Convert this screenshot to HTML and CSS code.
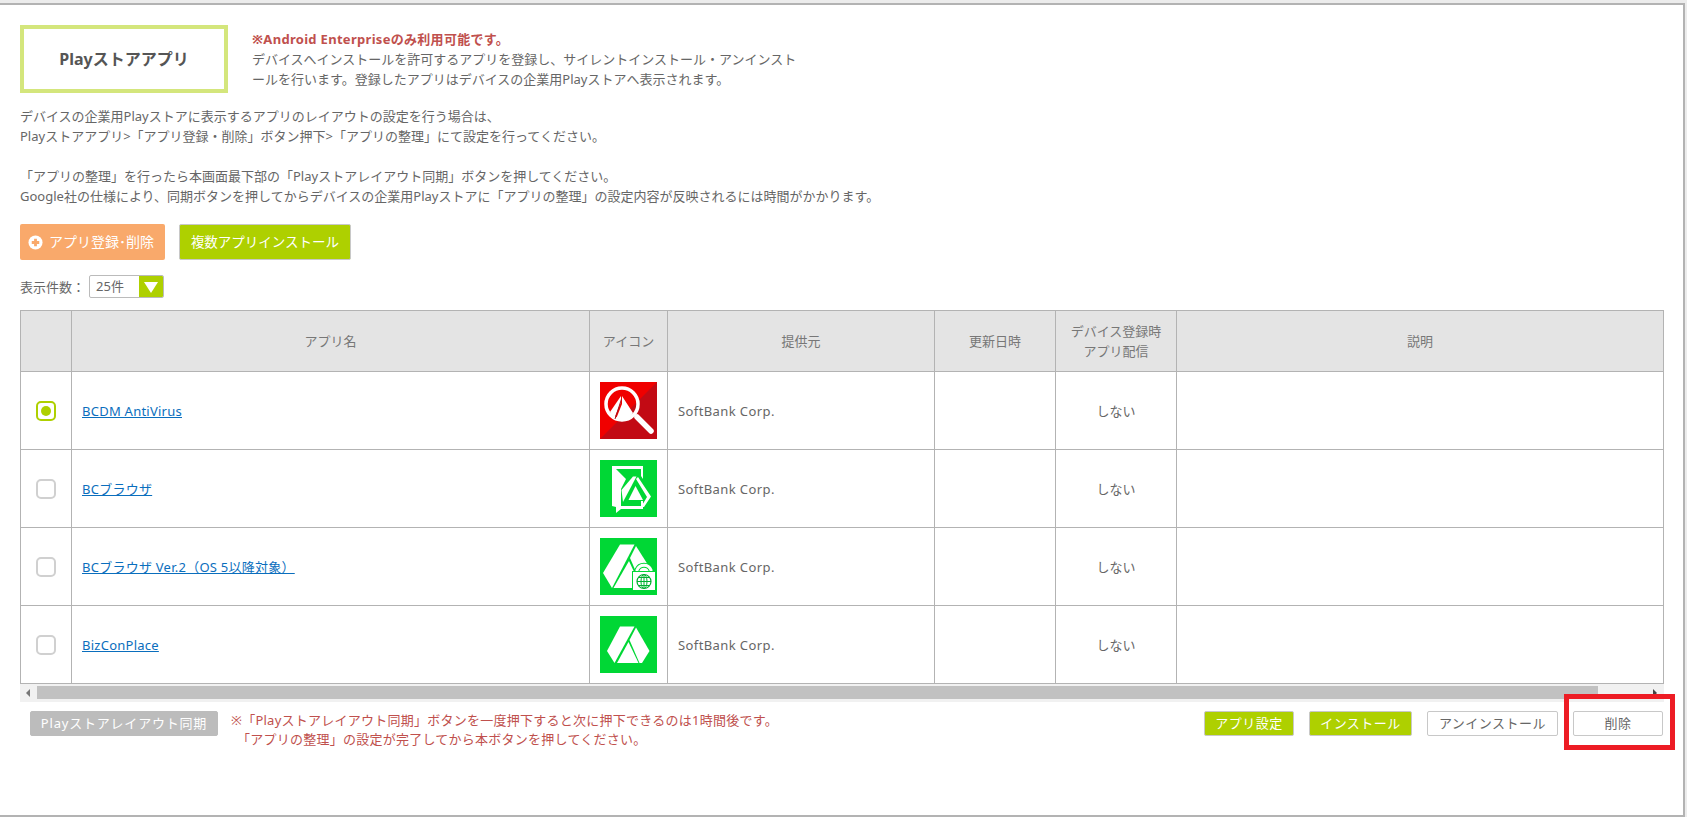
FILE: index.html
```html
<!DOCTYPE html>
<html lang="ja">
<head>
    <meta charset="UTF-8">
    <meta name="viewport" content="width=device-width, initial-scale=1.0">
    <title>Playストアアプリ</title>
    <link rel="stylesheet" href="styles.css">
</head>
<body>
<div class="frame">
    <div class="intro">
        <h1 class="page-title">Playストアアプリ</h1>
        <div class="intro-text">
            <p class="note">※Android Enterpriseのみ利用可能です。</p>
            <p>デバイスへインストールを許可するアプリを登録し、サイレントインストール・アンインストールを行います。登録したアプリはデバイスの企業用Playストアへ表示されます。</p>
        </div>
    </div>

    <p class="guide">デバイスの企業用Playストアに表示するアプリのレイアウトの設定を行う場合は、<br>Playストアアプリ&gt;「アプリ登録・削除」ボタン押下&gt;「アプリの整理」にて設定を行ってください。</p>
    <p class="guide">「アプリの整理」を行ったら本画面最下部の「Playストアレイアウト同期」ボタンを押してください。<br>Google社の仕様により、同期ボタンを押してからデバイスの企業用Playストアに「アプリの整理」の設定内容が反映されるには時間がかかります。</p>

    <div class="actions">
        <a class="btn-orange">
            <svg class="plus" viewBox="0 0 16 16"><circle cx="8" cy="8" r="7.5" fill="#fff"/><path d="M8 4v8M4 8h8" stroke="#f9a96b" stroke-width="3"/></svg>
            アプリ登録･削除
        </a>
        <a class="btn-green">複数アプリインストール</a>
    </div>

    <div class="per-page">
        <span>表示件数：</span>
        <div class="select">
            <span class="select-value">25件</span>
            <span class="select-arrow"></span>
        </div>
    </div>

    <table class="apps">
        <colgroup>
            <col class="c-check"><col class="c-name"><col class="c-icon"><col class="c-vendor"><col class="c-date"><col class="c-deliver"><col>
        </colgroup>
        <thead>
            <tr>
                <th></th>
                <th>アプリ名</th>
                <th>アイコン</th>
                <th>提供元</th>
                <th>更新日時</th>
                <th>デバイス登録時<br>アプリ配信</th>
                <th>説明</th>
            </tr>
        </thead>
        <tbody>
            <tr>
                <td><span class="radio checked"></span></td>
                <td><a href="#">BCDM AntiVirus</a></td>
                <td class="icon-cell">
                    <svg class="app-icon" viewBox="0 0 57 57">
                        <rect width="57" height="57" fill="#f00000"/>
                        <path d="M57 0V57H0Z" fill="#c20a14"/>
                        <path d="M37 35L51 49" stroke="#fff" stroke-width="5.5" stroke-linecap="round"/>
                        <circle cx="22" cy="22" r="16" fill="none" stroke="#fff" stroke-width="3.5"/>
                        <path d="M21 14L10 30L14 37L21 20Z" fill="#fff"/>
                        <path d="M22 14L33 31L29 37H16L22 22Z" fill="#fff"/>
                        <path d="M21.5 17L15 37" stroke="#a8121c" stroke-width="1"/>
                    </svg>
                </td>
                <td class="vendor">SoftBank Corp.</td>
                <td></td>
                <td class="center">しない</td>
                <td></td>
            </tr>
            <tr>
                <td><span class="radio"></span></td>
                <td><a href="#">BCブラウザ</a></td>
                <td class="icon-cell">
                    <svg class="app-icon" viewBox="0 0 57 57">
                        <rect width="57" height="57" fill="#00d735"/>
                        <path d="M12 6H43V19L41 16V9H16L26 19L21 29V46H41V41H43V49H21L16 53V47L12 46Z" fill="#fff"/>
                        <path d="M33 16.5H36.5L23 42L21.5 30Z" fill="#fff"/>
                        <path d="M38 17L51 36.5L44 47H41L47 37L36 19Z" fill="#fff"/>
                        <path d="M35.5 26L43 40H28.5Z" fill="#fff"/>
                    </svg>
                </td>
                <td class="vendor">SoftBank Corp.</td>
                <td></td>
                <td class="center">しない</td>
                <td></td>
            </tr>
            <tr>
                <td><span class="radio"></span></td>
                <td><a href="#">BCブラウザ Ver.2（OS 5以降対象）</a></td>
                <td class="icon-cell">
                    <svg class="app-icon" viewBox="0 0 57 57">
                        <rect width="57" height="57" fill="#00d735"/>
                        <path d="M20 6.5H34.5L12 50L3 35Z" fill="#fff"/>
                        <path d="M36 8L55 38L48 50H43L30 20Z" fill="#fff"/>
                        <path d="M29 23L41.5 50H13.5Z" fill="#fff"/>
                        <path d="M37 34V32A7.5 7.5 0 0 1 51 32V34" fill="none" stroke="#00d735" stroke-width="5"/>
                        <path d="M37 34V32A7.5 7.5 0 0 1 51 32V34" fill="none" stroke="#fff" stroke-width="3"/>
                        <rect x="32.5" y="33.5" width="23" height="19" fill="#fff" stroke="#00d735"/>
                        <circle cx="44" cy="43.5" r="7" fill="none" stroke="#00b030" stroke-width="1.2"/>
                        <path d="M37 43.5H51M44 36.5V50.5M38.5 39.5H49.5M38.5 47.5H49.5" stroke="#00b030" stroke-width="1"/>
                        <ellipse cx="44" cy="43.5" rx="3" ry="7" fill="none" stroke="#00b030"/>
                    </svg>
                </td>
                <td class="vendor">SoftBank Corp.</td>
                <td></td>
                <td class="center">しない</td>
                <td></td>
            </tr>
            <tr>
                <td><span class="radio"></span></td>
                <td><a href="#">BizConPlace</a></td>
                <td class="icon-cell">
                    <svg class="app-icon" viewBox="0 0 57 57">
                        <rect width="57" height="57" fill="#00d735"/>
                        <path d="M20 10.5H34.5L14.5 47L7 35Z" fill="#fff"/>
                        <path d="M36 11.5L49.5 35L42 47H39.5L29.5 24Z" fill="#fff"/>
                        <path d="M28.5 26L38.5 47H17Z" fill="#fff"/>
                    </svg>
                </td>
                <td class="vendor">SoftBank Corp.</td>
                <td></td>
                <td class="center">しない</td>
                <td></td>
            </tr>
        </tbody>
    </table>

    <div class="scrollbar">
        <span class="arrow-left"></span>
        <div class="thumb"></div>
        <span class="arrow-right"></span>
    </div>

    <div class="footer-bar">
        <a class="btn-small btn-sync">Playストアレイアウト同期</a>
        <p class="sync-note">※「Playストアレイアウト同期」ボタンを一度押下すると次に押下できるのは1時間後です。<br><span class="indent">「アプリの整理」の設定が完了してから本ボタンを押してください。</span></p>
        <div class="footer-buttons">
            <a class="btn-small btn-lime w-setting">アプリ設定</a>
            <a class="btn-small btn-lime w-install">インストール</a>
            <a class="btn-small btn-plain w-uninstall">アンインストール</a>
            <a class="btn-small btn-plain w-delete">削除</a>
        </div>
    </div>

    <div class="highlight"></div>
</div>
</body>
</html>
```

FILE: styles.css
```css
* {
  margin: 0;
  padding: 0;
  box-sizing: border-box;
}

html, body {
  height: 100%;
  overflow: hidden;
}

body {
  font-family: "Noto Sans", "Noto Sans CJK JP", sans-serif;
  font-size: 13px;
  line-height: 20px;
  color: #666;
  background-color: #ececec;
  padding-top: 3px;
}

.frame {
  position: relative;
  width: 1685px;
  height: 814px;
  background-color: #fff;
  border-top: 2px solid #b3b3b3;
  border-right: 2px solid #b3b3b3;
  border-bottom: 2px solid #b3b3b3;
  padding: 20px 20px 0 20px;
}

.intro {
  display: flex;
  margin-bottom: 13px;
}

.page-title {
  width: 208px;
  height: 68px;
  border: 4px solid #d4e67c;
  font-size: 16px;
  font-weight: bold;
  line-height: 60px;
  text-align: center;
  color: #555;
}

.intro-text {
  width: 556px;
  margin-left: 24px;
  margin-top: 4px;
}

.note {
  color: #c0504d;
  font-weight: bold;
  letter-spacing: 0.3px;
}

.guide {
  margin-bottom: 20px;
}

.guide + .actions {
  margin-top: -2px;
}

.actions {
  display: flex;
  gap: 14px;
}

.btn-orange, .btn-green {
  display: flex;
  align-items: center;
  height: 36px;
  border-radius: 2px;
  color: #fff;
  font-size: 14px;
}

.btn-orange {
  width: 145px;
  padding-left: 8px;
  background-color: #f9a96b;
  gap: 6px;
}

.btn-green {
  justify-content: center;
  width: 172px;
  background-color: #aed000;
  border: 1px solid #c8c8c8;
  font-size: 13.5px;
}

.plus {
  width: 15px;
  height: 15px;
}

.per-page {
  display: flex;
  align-items: center;
  height: 23px;
  margin-top: 15px;
}

.select {
  display: flex;
  width: 75px;
  height: 23px;
  margin-left: 4px;
  border: 1px solid #bbb;
  border-radius: 2px;
  overflow: hidden;
}

.select-value {
  flex: 1;
  padding-left: 6px;
  line-height: 21px;
}

.select-arrow {
  position: relative;
  width: 24px;
  background-color: #aed000;
}

.select-arrow::after {
  content: "";
  position: absolute;
  top: 6px;
  left: 5px;
  border-left: 7px solid transparent;
  border-right: 7px solid transparent;
  border-top: 11px solid #fff;
}

.apps {
  width: 1644px;
  margin-top: 12px;
  border-collapse: collapse;
  table-layout: fixed;
}

.c-check { width: 51px; }
.c-name { width: 518px; }
.c-icon { width: 78px; }
.c-vendor { width: 267px; }
.c-date { width: 121px; }
.c-deliver { width: 121px; }

.apps th, .apps td {
  border: 1px solid #b3b3b3;
}

.apps th {
  height: 61px;
  background-color: #e4e4e4;
  font-weight: normal;
  color: #777;
  text-align: center;
}

.apps td {
  height: 78px;
  padding: 0 10px;
}

.apps td:first-child {
  padding: 0;
  text-align: center;
}

.apps td.center {
  text-align: center;
}

.apps td.vendor {
  letter-spacing: 0.4px;
}

.apps td.icon-cell {
  padding: 0;
  text-align: center;
}

.apps a {
  color: #0a6ebd;
  text-decoration: underline;
  letter-spacing: 0.25px;
}

.radio {
  display: inline-block;
  width: 20px;
  height: 20px;
  border: 2px solid #d0d0d0;
  border-radius: 5px;
  vertical-align: middle;
  position: relative;
}

.radio.checked {
  border-color: #aed000;
}

.radio.checked::after {
  content: "";
  position: absolute;
  top: 3px;
  left: 3px;
  width: 10px;
  height: 10px;
  border-radius: 50%;
  background-color: #aed000;
}

.app-icon {
  display: block;
  width: 57px;
  height: 57px;
  margin: 0 auto;
}

.scrollbar {
  display: flex;
  align-items: center;
  width: 1644px;
  height: 18px;
  background-color: #f1f1f1;
}

.arrow-left {
  width: 0;
  height: 0;
  margin-left: 6px;
  border-top: 4px solid transparent;
  border-bottom: 4px solid transparent;
  border-right: 4px solid #777;
}

.thumb {
  width: 1561px;
  height: 13px;
  margin-left: 7px;
  margin-bottom: 2px;
  background-color: #c1c1c1;
}

.arrow-right {
  width: 0;
  height: 0;
  margin-left: 55px;
  border-top: 4px solid transparent;
  border-bottom: 4px solid transparent;
  border-left: 4px solid #444;
}

.footer-bar {
  display: flex;
  align-items: flex-start;
  margin-top: 9px;
}

.btn-small {
  display: block;
  height: 25px;
  border-radius: 2px;
  line-height: 23px;
  letter-spacing: 0.5px;
  text-align: center;
  border: 1px solid #c8c8c8;
}

.btn-sync {
  width: 188px;
  margin-left: 10px;
  background-color: #bcbcbc;
  border-color: #bcbcbc;
  color: #fff;
  letter-spacing: 0.8px;
}

.sync-note {
  margin-left: 13px;
  line-height: 19px;
  letter-spacing: 0.25px;
  color: #c0504d;
}

.indent {
  padding-left: 6px;
}

.footer-buttons {
  display: flex;
  margin-left: auto;
  gap: 15px;
}

.btn-lime {
  background-color: #aed000;
  color: #fff;
}

.btn-plain {
  background-color: #fff;
}

.w-setting { width: 90px; }
.w-install { width: 103px; }
.w-uninstall { width: 131px; }
.w-delete { width: 90px; }

/* annotation round the delete button */
.highlight {
  position: absolute;
  left: 1564px;
  top: 689px;
  width: 111px;
  height: 56px;
  border: 5px solid #ed1c24;
}
```
